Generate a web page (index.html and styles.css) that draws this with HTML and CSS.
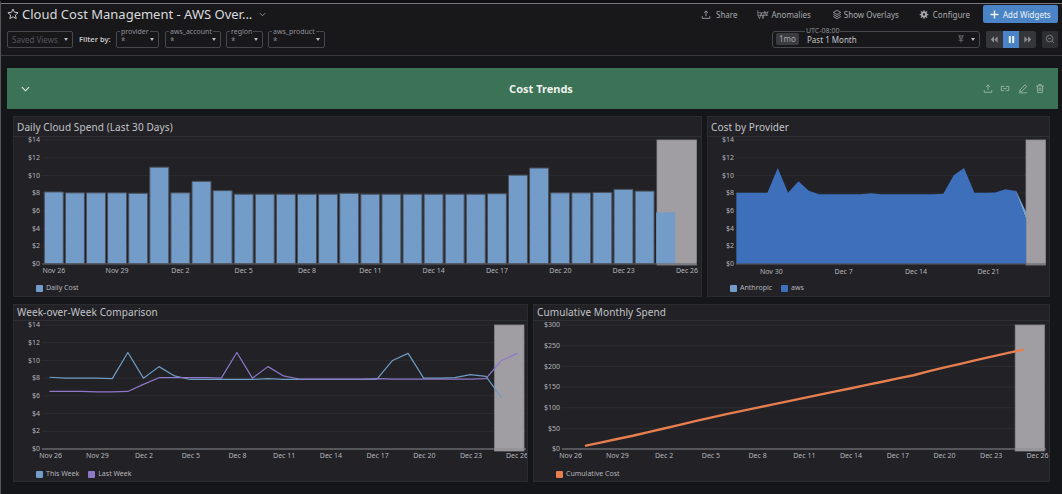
FILE: index.html
```html
<!DOCTYPE html>
<html lang="en">
<head>
<meta charset="utf-8">
<title>Cloud Cost Management - AWS Overview</title>
<link rel="stylesheet" href="styles.css">
</head>
<body>
<div class="page">
  <header class="topbar">
    <div class="topbar-row">
      <div class="title-group">
        <svg class="star" viewBox="0 0 12 12"><path d="M6 1l1.500 3.300 3.600.4-2.700 2.400.8 3.500L6 8.800l-3.200 1.800.8-3.500L.9 4.700l3.600-.4z"/></svg>
        <h1 class="dash-title">Cloud Cost Management - AWS Over...</h1>
        <svg class="title-chevron" viewBox="0 0 8 5"><path d="M1 1l3 3 3-3"/></svg>
      </div>
      <nav class="actions">
        <a class="action action-share"><svg viewBox="0 0 12 12"><path d="M6 8V2M3.800 4L6 1.600 8.200 4M1.500 8v2.600h9V8"/></svg>Share</a>
        <a class="action action-anom"><svg viewBox="0 0 14 12"><path d="M1 1v6l2 4 2-7 2 7 2-9 2 5 2-5M1 4h12M1 7h12"/></svg>Anomalies</a>
        <a class="action action-over"><svg viewBox="0 0 12 12"><path d="M6 1l4.500 2.500L6 6 1.500 3.500zM1.500 6L6 8.500 10.500 6M1.500 8.500L6 11l4.500-2.500"/></svg>Show Overlays</a>
        <a class="action action-conf"><svg viewBox="0 0 12 12"><circle class="gear" cx="6" cy="6" r="3.600"/><path class="gear-teeth" d="M6 .8v10.400M.8 6h10.400M2.300 2.300l7.400 7.400M9.700 2.300l-7.400 7.400"/><circle class="gear-hole" cx="6" cy="6" r="1.400"/></svg>Configure</a>
        <button class="add-btn"><svg viewBox="0 0 10 10"><path d="M5 .5v9M.5 5h9"/></svg>Add Widgets</button>
      </nav>
    </div>
    <div class="topbar-row filter-row">
      <div class="filters">
        <div class="select saved"><span>Saved Views</span><i class="caret"></i></div>
        <span class="filter-label">Filter by:</span>
        <div class="select var w-provider"><em>provider</em><span>*</span><i class="caret"></i></div>
        <div class="select var w-account"><em>aws_account</em><span>*</span><i class="caret"></i></div>
        <div class="select var w-region"><em>region</em><span>*</span><i class="caret"></i></div>
        <div class="select var w-product"><em>aws_product</em><span>*</span><i class="caret"></i></div>
      </div>
      <div class="time-tools">
        <div class="timepicker">
          <em>UTC-08:00</em>
          <b class="chip">1mo</b>
          <span class="range">Past 1 Month</span>
          <svg class="pin" viewBox="0 0 10 10"><path d="M1.500 1h7M3 4h4M5 4v5.500M2 6.500h6M3.500 1v3M6.500 1v3"/></svg>
          <i class="caret"></i>
        </div>
        <div class="playback">
          <button class="pb"><svg viewBox="0 0 10 8"><path d="M5 0v8L1 4zM9.500 0v8L5.500 4z"/></svg></button>
          <button class="pb pb-on"><svg viewBox="0 0 10 10"><path d="M2 1h2.200v8H2zM5.800 1H8v8H5.800z"/></svg></button>
          <button class="pb"><svg viewBox="0 0 10 8"><path d="M.5 0v8l4-4zM5 0v8l4-4z"/></svg></button>
        </div>
        <button class="zoom-out"><svg viewBox="0 0 12 12"><circle cx="5.500" cy="5.500" r="4"/><path d="M8.500 8.500L11 11M3.800 5.500h3.400"/></svg></button>
      </div>
    </div>
  </header>

  <main class="content">
    <section class="section-bar">
      <svg class="section-chevron" viewBox="0 0 10 6"><path d="M1 1l4 4 4-4"/></svg>
      <h2>Cost Trends</h2>
      <div class="section-icons">
        <svg viewBox="0 0 12 12"><path d="M6 8V2M3.800 4L6 1.600 8.200 4M1.500 8v2.600h9V8"/></svg>
        <svg viewBox="0 0 12 12"><path d="M5 3.500H1.500v5H5M7 3.500h3.500v5H7M4 6h4"/></svg>
        <svg viewBox="0 0 12 12"><path d="M2 10l.6-2.600L8.500 1.500l2 2L4.600 9.400zM1 11.200h10"/></svg>
        <svg viewBox="0 0 12 12"><path d="M1.500 3h9M4.500 3V1.300h3V3M2.700 3l.5 8h5.600l.5-8M5 5v4M7 5v4"/></svg>
      </div>
    </section>

    <div class="row row-top">
      <article class="panel">
        <h3>Daily Cloud Spend (Last 30 Days)</h3>
        <svg class="chart" viewBox="14 134 687 143">
          <g class="grid"><path d="M42 140H697M42 157.700H697M42 175.400H697M42 193.100H697M42 210.900H697M42 228.600H697M42 246.300H697"/></g>
          <rect class="region" x="657" y="140" width="39.500" height="125"/>
          <g class="bars" transform="translate(53.800,263.700) scale(21.100,-8.857)">
            <rect x="-.45" width=".9" height="8.100"/><rect x=".55" width=".9" height="8"/><rect x="1.550" width=".9" height="8"/><rect x="2.550" width=".9" height="8"/><rect x="3.550" width=".9" height="7.950"/><rect x="4.550" width=".9" height="10.900"/><rect x="5.550" width=".9" height="8"/><rect x="6.550" width=".9" height="9.300"/><rect x="7.550" width=".9" height="8.250"/><rect x="8.550" width=".9" height="7.850"/><rect x="9.550" width=".9" height="7.850"/><rect x="10.550" width=".9" height="7.850"/><rect x="11.550" width=".9" height="7.850"/><rect x="12.550" width=".9" height="7.850"/><rect x="13.550" width=".9" height="7.950"/><rect x="14.550" width=".9" height="7.850"/><rect x="15.550" width=".9" height="7.850"/><rect x="16.550" width=".9" height="7.850"/><rect x="17.550" width=".9" height="7.850"/><rect x="18.550" width=".9" height="7.850"/><rect x="19.550" width=".9" height="7.850"/><rect x="20.550" width=".9" height="7.900"/><rect x="21.550" width=".9" height="10"/><rect x="22.550" width=".9" height="10.800"/><rect x="23.550" width=".9" height="8"/><rect x="24.550" width=".9" height="8"/><rect x="25.550" width=".9" height="8.050"/><rect x="26.550" width=".9" height="8.400"/><rect x="27.550" width=".9" height="8.200"/><rect class="bar-last" x="28.550" width=".9" height="5.800"/>
          </g>
          <path class="axis" d="M42 264H697"/>
          <g class="y-labels">
            <text x="40" y="142">$14</text><text x="40" y="159.500">$12</text><text x="40" y="177.500">$10</text><text x="40" y="195">$8</text><text x="40" y="213">$6</text><text x="40" y="230.500">$4</text><text x="40" y="248">$2</text><text x="40" y="266">$0</text>
          </g>
          <g class="x-labels">
            <text x="53.800" y="272.500">Nov 26</text><text x="117" y="272.500">Nov 29</text><text x="180.400" y="272.500">Dec 2</text><text x="243.700" y="272.500">Dec 5</text><text x="307" y="272.500">Dec 8</text><text x="370.400" y="272.500">Dec 11</text><text x="433.700" y="272.500">Dec 14</text><text x="497" y="272.500">Dec 17</text><text x="560.400" y="272.500">Dec 20</text><text x="623.700" y="272.500">Dec 23</text><text x="687" y="272.500">Dec 26</text>
          </g>
        </svg>
        <ul class="legend"><li><i class="sw sw-light"></i>Daily Cost</li></ul>
      </article>

      <article class="panel">
        <h3>Cost by Provider</h3>
        <svg class="chart" viewBox="708 134 341 143">
          <g class="grid"><path d="M736 140H1046M736 157.700H1046M736 175.400H1046M736 193.100H1046M736 210.900H1046M736 228.600H1046M736 246.300H1046"/></g>
          <rect class="region" x="1026" y="140" width="19.500" height="125"/>
          <g transform="translate(726,263.700) scale(10.350,-8.857)">
            <polygon class="area-anth" points="28,8.300 29,5.800 29,5 28,8.100"/>
            <polygon class="area-aws" points="1,0 1,8 2,8 3,8 4,8 5,10.800 6,8 7,9.300 8,8.250 9,7.850 10,7.850 11,7.850 12,7.850 13,7.850 14,7.950 15,7.850 16,7.850 17,7.850 18,7.850 19,7.850 20,7.850 21,7.900 22,10 23,10.800 24,8 25,8 26,8.050 27,8.400 28,8.200 29,5 29,0"/>
          </g>
          <path class="axis" d="M736 264H1046"/>
          <g class="y-labels">
            <text x="734" y="142">$14</text><text x="734" y="159.500">$12</text><text x="734" y="177.500">$10</text><text x="734" y="195">$8</text><text x="734" y="213">$6</text><text x="734" y="230.500">$4</text><text x="734" y="248">$2</text><text x="734" y="266">$0</text>
          </g>
          <g class="x-labels">
            <text x="771.300" y="273.500">Nov 30</text><text x="843.700" y="273.500">Dec 7</text><text x="916" y="273.500">Dec 14</text><text x="988.500" y="273.500">Dec 21</text>
          </g>
        </svg>
        <ul class="legend"><li><i class="sw sw-light"></i>Anthropic</li><li><i class="sw sw-blue"></i>aws</li></ul>
      </article>
    </div>

    <div class="row row-bottom">
      <article class="panel">
        <h3>Week-over-Week Comparison</h3>
        <svg class="chart" viewBox="14 321 513 140">
          <g class="grid"><path d="M42 325H526M42 342.700H526M42 360.400H526M42 378.100H526M42 395.900H526M42 413.600H526M42 431.300H526"/></g>
          <rect class="region" x="494.600" y="325" width="29.400" height="126"/>
          <g transform="translate(50,449) scale(15.570,-8.857)">
            <polyline class="line line-this" points="0,8.100 1,8 2,8 3,8 4,7.950 5,10.900 6,8 7,9.300 8,8.250 9,7.850 10,7.850 11,7.850 12,7.850 13,7.850 14,7.950 15,7.850 16,7.850 17,7.850 18,7.850 19,7.850 20,7.850 21,7.900 22,10 23,10.800 24,8 25,8 26,8.050 27,8.400 28,8.200 29,5.800"/>
            <polyline class="line line-last" points="0,6.500 1,6.500 2,6.500 3,6.450 4,6.450 5,6.500 6,7.300 7,8.050 8,8.050 9,8.050 10,8.050 11,8 12,10.900 13,8 14,9.300 15,8.250 16,7.900 17,7.900 18,7.900 19,7.900 20,7.900 21,7.950 22,7.900 23,7.900 24,7.900 25,7.900 26,7.900 27,7.900 28,7.950 29,10 30,10.800"/>
          </g>
          <path class="axis-strong" d="M42 449H526"/>
          <g class="y-labels">
            <text x="40" y="327">$14</text><text x="40" y="344.500">$12</text><text x="40" y="362.500">$10</text><text x="40" y="380">$8</text><text x="40" y="398">$6</text><text x="40" y="415.500">$4</text><text x="40" y="433">$2</text><text x="40" y="451">$0</text>
          </g>
          <g class="x-labels">
            <text x="50.700" y="457.500">Nov 26</text><text x="97.400" y="457.500">Nov 29</text><text x="144" y="457.500">Dec 2</text><text x="190.800" y="457.500">Dec 5</text><text x="237.500" y="457.500">Dec 8</text><text x="284.200" y="457.500">Dec 11</text><text x="330.900" y="457.500">Dec 14</text><text x="377.600" y="457.500">Dec 17</text><text x="424.300" y="457.500">Dec 20</text><text x="471" y="457.500">Dec 23</text><text x="517" y="457.500">Dec 26</text>
          </g>
        </svg>
        <ul class="legend"><li><i class="sw sw-light"></i>This Week</li><li><i class="sw sw-purple"></i>Last Week</li></ul>
      </article>

      <article class="panel">
        <h3>Cumulative Monthly Spend</h3>
        <svg class="chart" viewBox="534 321 515 140">
          <g class="grid"><path d="M562 325H1046M562 345.700H1046M562 366.300H1046M562 387H1046M562 407.700H1046M562 428.300H1046"/></g>
          <rect class="region" x="1015.200" y="325" width="29.200" height="126"/>
          <g transform="translate(570.400,449) scale(15.600,-.4133)">
            <polyline class="line line-cum" points="1,8.100 2,16.100 3,24.100 4,32.100 5,41 6,49.500 7,58.500 8,67.500 9,76 10,84.300 11,92.200 12,100 13,107.900 14,115.700 15,123.600 16,131.400 17,139.300 18,147.100 19,155 20,162.800 21,170.700 22,178.500 23,188.500 24,197.500 25,206 26,215 27,223.400 28,231.800 29,240"/>
          </g>
          <path class="axis-strong" d="M562 449H1046"/>
          <g class="y-labels">
            <text x="560" y="327">$300</text><text x="560" y="348">$250</text><text x="560" y="368.500">$200</text><text x="560" y="389">$150</text><text x="560" y="410">$100</text><text x="560" y="430.500">$50</text><text x="560" y="451">$0</text>
          </g>
          <g class="x-labels">
            <text x="570.700" y="457.500">Nov 26</text><text x="617.400" y="457.500">Nov 29</text><text x="664.100" y="457.500">Dec 2</text><text x="710.900" y="457.500">Dec 5</text><text x="757.600" y="457.500">Dec 8</text><text x="804.300" y="457.500">Dec 11</text><text x="851" y="457.500">Dec 14</text><text x="897.800" y="457.500">Dec 17</text><text x="944.500" y="457.500">Dec 20</text><text x="991.200" y="457.500">Dec 23</text><text x="1037.500" y="457.500">Dec 26</text>
          </g>
        </svg>
        <ul class="legend"><li><i class="sw sw-orange"></i>Cumulative Cost</li></ul>
      </article>
    </div>
  </main>
</div>
</body>
</html>
```
FILE: styles.css
```css
* { box-sizing: border-box; }
html, body { margin: 0; padding: 0; height: 100%; }
body {
  background: #151619;
  color: #c6c7cb;
  font-family: "Noto Sans", "Open Sans", sans-serif;
  overflow: hidden;
}
.page {
  width: 1062px;
  height: 494px;
  display: flex;
  flex-direction: column;
  border-top: 3px solid #0f0f11;
  border-left: 1px solid #55565a;
  overflow: hidden;
}
svg { display: block; fill: none; stroke: currentColor; stroke-width: 1; }

/* top bar */
.topbar {
  height: 53px;
  flex: none;
  background: #18181b;
  border-top: 1px solid #77787b;
  border-bottom: 1px solid #38393d;
  padding: 0 4px 0 6px;
  display: flex;
  flex-direction: column;
}
.topbar-row { display: flex; align-items: center; justify-content: space-between; }
.title-group { display: flex; align-items: center; height: 20px; }
.star { width: 12px; height: 12px; color: #c4c5c8; margin-right: 3px; }
.dash-title { margin: 0; font-size: 13px; line-height: 20px; font-weight: 400; color: #d9dadc; white-space: nowrap; width: 237px; }
.title-chevron { width: 7px; height: 5px; color: #9b9ca0; }
.actions { display: flex; align-items: center; height: 18px; font-size: 8px; color: #a9aaae; }
.action { display: flex; align-items: center; white-space: nowrap; }
.action svg { width: 10px; height: 11px; }
.action-anom svg { width: 12px; height: 11px; stroke-width: .7; }
.action-share { margin-right: 20px; gap: 5px; }
.action-anom { margin-right: 21px; gap: 2px; }
.action-over { margin-right: 20px; gap: 2px; }
.action-conf { margin-right: 13px; gap: 4px; }
.gear { fill: currentColor; stroke: none; }
.gear-teeth { stroke-width: 1.500; }
.gear-hole { fill: #18181b; stroke: none; }
.add-btn {
  display: flex; align-items: center; gap: 4px;
  height: 18px; width: 75px; padding: 0 0 0 7px;
  border: 0; border-radius: 2px;
  background: #4a83c6; color: #eef3f9;
  font: 8px "Noto Sans", sans-serif; white-space: nowrap;
}
.add-btn svg { width: 9px; height: 9px; stroke-width: 1.600; }

/* filter row */
.filter-row { height: 18px; margin-top: 6px; }
.filters { display: flex; align-items: center; }
.select {
  position: relative;
  height: 17px;
  border: 1px solid #47484d;
  border-radius: 2px;
  display: flex; align-items: center; justify-content: space-between;
  padding: 0 4px 0 4px;
  font-size: 8px; color: #7b7c80;
}
.select em, .timepicker em {
  position: absolute; top: -4px; left: 3px;
  padding: 0 1px; background: #18181b;
  font-style: normal; font-size: 7px; line-height: 8px; color: #909195;
}
.var span { color: #85868a; font-size: 8px; padding-top: 2px; }
.caret { width: 0; height: 0; border: 2.500px solid transparent; border-top: 3px solid #b8b9bc; border-bottom: 0; display: block; flex: none; }
.saved { width: 66px; color: #55565b; }
.filter-label { font-size: 7.500px; font-weight: 600; color: #c4c5c8; width: 32px; margin: 0 5px 0 6px; white-space: nowrap; }
.w-provider { width: 43px; margin-right: 6px; }
.w-account { width: 56px; margin-right: 5px; }
.w-region { width: 37px; margin-right: 5px; }
.w-product { width: 57px; }
.time-tools { display: flex; align-items: center; }
.timepicker {
  position: relative;
  width: 208px; height: 17px;
  border: 1px solid #47484d; border-radius: 3px;
  display: flex; align-items: center;
  padding: 0 4px 0 3px;
  font-size: 8px; color: #c4c5c8;
}
.timepicker em { left: 32px; top: -5px; }
.chip { width: 23px; height: 12px; line-height: 12px; text-align: center; background: #3b3c40; border-radius: 2px; font-weight: 400; color: #a7a8ac; }
.range { margin-left: 8px; flex: 1; }
.pin { width: 8px; height: 8px; color: #8d8e92; margin-right: 6px; stroke-width: .8; }
.playback { display: flex; width: 50px; margin-left: 6px; background: #35363a; border-radius: 2px; height: 17px; }
.pb { flex: 1; height: 17px; border: 0; padding: 0; background: transparent; color: #8f9094; display: flex; align-items: center; justify-content: center; }
.pb svg { width: 8px; height: 7px; fill: currentColor; stroke: none; }
.pb-on { background: #4a83c6; color: #eef3f9; }
.pb-on svg { width: 9px; height: 9px; }
.zoom-out { width: 16px; height: 17px; margin-left: 6px; padding: 0; border: 0; border-radius: 2px; background: #2e2f33; color: #85868a; display: flex; align-items: center; justify-content: center; }
.zoom-out svg { width: 10px; height: 10px; }

/* content */
.content { flex: 1; min-height: 0; padding: 12px 4px 0 6px; display: flex; flex-direction: column; }
.section-bar {
  height: 41px; flex: none;
  background: #3c7255;
  display: flex; align-items: center; justify-content: center;
  padding-left: 17px;
  position: relative;
  color: #fff;
}
.section-bar h2 { margin: 0; font-size: 11px; font-weight: 700; color: #eef2ef; }
.section-chevron { position: absolute; left: 14px; top: 18px; width: 9px; height: 6px; color: #e6ede8; stroke-width: 1.200; }
.section-icons { position: absolute; right: 13px; top: 15px; display: flex; gap: 7.500px; color: #a9c4b4; }
.section-icons svg { width: 10px; height: 11px; stroke-width: .9; }

.row { display: grid; column-gap: 5px; padding-left: 6px; flex: none; }
.row-top { grid-template-columns: 689px 343px; height: 181px; margin-top: 7px; }
.row-bottom { grid-template-columns: 515px 517px; height: 178px; margin-top: 7px; }
.panel {
  background: #212126;
  border: 1px solid #2b2c30;
  display: flex; flex-direction: column;
  min-width: 0;
}
.panel h3 {
  margin: 0; flex: none;
  height: 20px; padding: 0 0 0 3px;
  font-size: 10px; line-height: 20px; font-weight: 400;
  color: #c3c4c8; letter-spacing: .1px;
  border-bottom: 1px solid #2f3035;
  white-space: nowrap;
}
.row-bottom .panel h3 { height: 16px; line-height: 15px; }
.chart { width: 100%; height: 140px; flex: none; }
.row-top .chart { height: 143px; margin-top: -3px; }
.legend { list-style: none; margin: 0; padding: 5px 0 0 22px; display: flex; gap: 9px; font-size: 7px; line-height: 12px; color: #b5b6ba; }
.row-bottom .legend { padding-top: 7px; }
.legend li { display: flex; align-items: center; gap: 3px; white-space: nowrap; }
.sw { width: 7px; height: 7px; border-radius: 1px; display: block; }
.sw-light { background: #739cc8; }
.sw-blue { background: #3d6fbb; }
.sw-purple { background: #8e78c8; }
.sw-orange { background: #e67e50; }

/* chart parts */
.grid path { stroke: #303136; stroke-width: .8; }
.region { fill: #a09ea2; stroke: #8a898d; stroke-width: .8; }
.bars rect { fill: #739cc8; stroke: #4a4f5b; stroke-width: 1; vector-effect: non-scaling-stroke; }
.bars .bar-last { stroke: none; }
.axis { stroke: #5c5f68; stroke-width: 1; }
.axis-strong { stroke: #8a8b8f; stroke-width: 1; }
.area-aws { fill: #3d6fbb; stroke: none; }
.area-anth { fill: #7ba6d4; stroke: none; }
.line { fill: none; stroke-linejoin: round; stroke-linecap: round; vector-effect: non-scaling-stroke; }
.line-this { stroke: #6f9cc4; stroke-width: 1.200; }
.line-last { stroke: #8e78c8; stroke-width: 1.200; }
.line-cum { stroke: #e67e50; stroke-width: 2.400; }
.y-labels text, .x-labels text { font-size: 7px; fill: #b5b6ba; stroke: none; }
.y-labels text { text-anchor: end; }
.x-labels text { text-anchor: middle; }
```
